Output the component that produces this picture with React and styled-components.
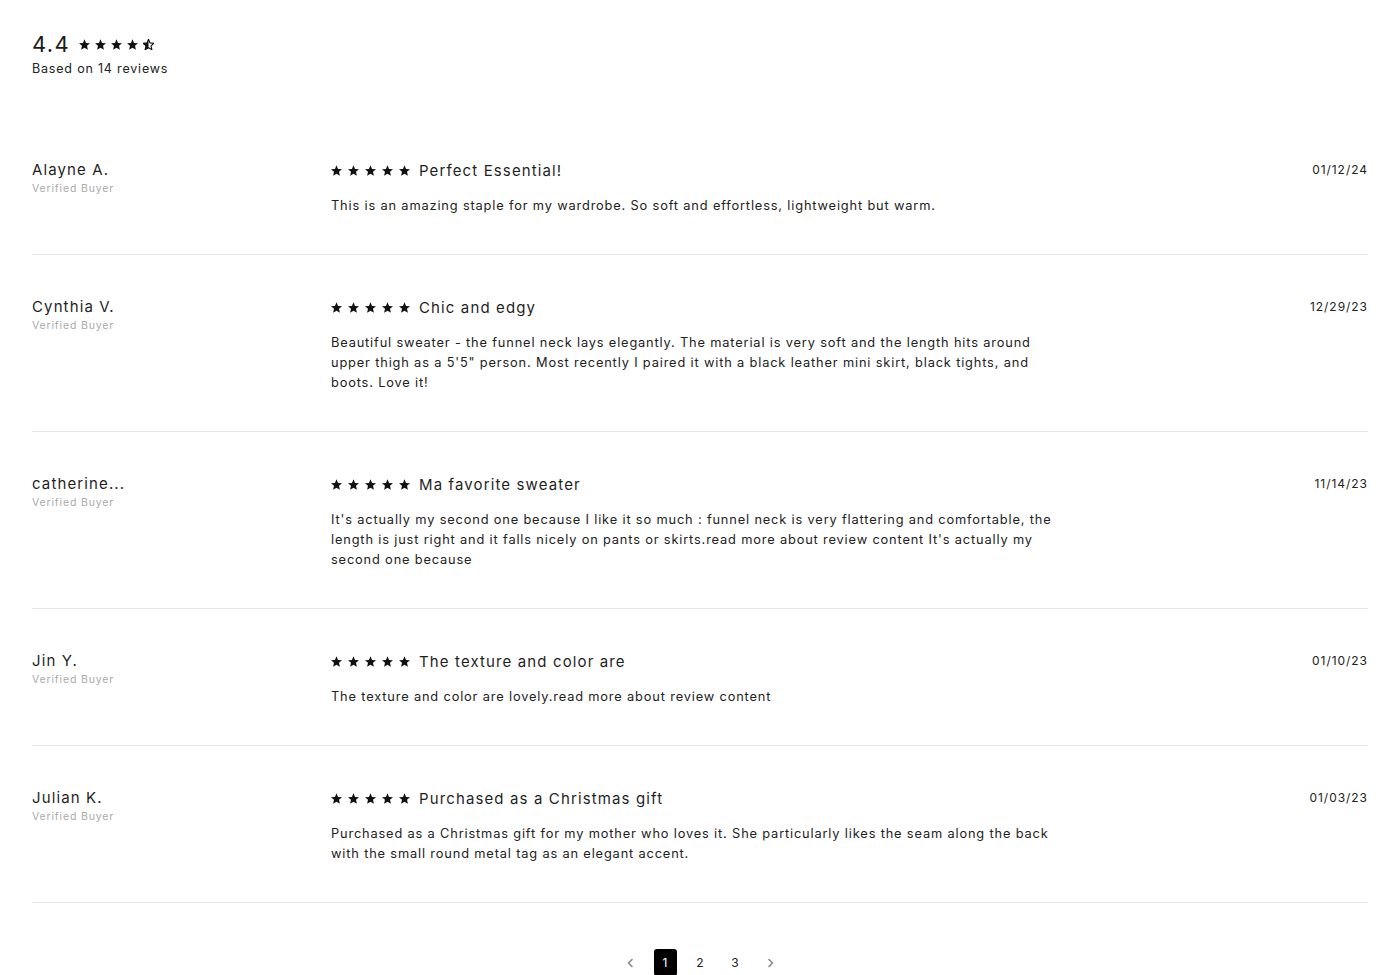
import React from "react";
import styled, { createGlobalStyle } from "styled-components";

const GlobalStyle = createGlobalStyle`
  body {
    margin: 0;
    background: #ffffff;
    font-family: "Inter", "Noto Sans", sans-serif;
    color: #1c1c1c;
  }
`;

const STAR = "M12 17.27L18.18 21l-1.64-7.03L22 9.24l-7.19-.61L12 2 9.19 8.63 2 9.24l5.46 4.73L5.82 21z";

const Page = styled.div`
  padding: 30px 32px 0 32px;
`;

const Summary = styled.div`
  display: flex;
  flex-direction: column;
  gap: 3px;
`;

const AverageRow = styled.div`
  display: flex;
  align-items: center;
  gap: 9px;
`;

const Average = styled.span`
  font-size: 22px;
  line-height: 28px;
  letter-spacing: 0.06em;
  color: #1a1a1a;
`;

const SummaryText = styled.div`
  font-size: 12.5px;
  letter-spacing: 0.065em;
  color: #222;
`;

const StarRow = styled.div`
  display: flex;
  align-items: center;
  gap: ${(p) => p.gap || 3}px;
`;

const List = styled.div`
  margin-top: 42px;
`;

const Row = styled.div`
  display: grid;
  grid-template-columns: 299px 1fr auto;
  padding: 42px 0 38px;
  border-bottom: 1.5px solid #e6e6e6;
`;

const Author = styled.div`
  display: flex;
  flex-direction: column;
  gap: 2px;
`;

const Name = styled.div`
  font-size: 15px;
  line-height: 20px;
  color: #1f1f1f;
  letter-spacing: 0.075em;
`;

const Verified = styled.div`
  font-size: 10.5px;
  color: #aaaaaa;
  letter-spacing: 0.08em;
`;

const Content = styled.div`
  max-width: 742px;
`;

const TitleRow = styled.div`
  display: flex;
  align-items: center;
  gap: 9px;
  height: 20px;
`;

const Title = styled.span`
  font-size: 15px;
  letter-spacing: 0.075em;
  color: #1f1f1f;
`;

const Body = styled.p`
  margin: 16px 0 0 0;
  font-size: 12.8px;
  line-height: 20px;
  letter-spacing: 0.066em;
  color: #222;
`;

const DateText = styled.div`
  font-size: 12px;
  line-height: 20px;
  letter-spacing: 0.08em;
  color: #222;
`;

const Pager = styled.div`
  display: flex;
  justify-content: center;
  align-items: center;
  gap: 12px;
  margin-top: 46px;
`;

const PageItem = styled.span`
  width: 23px;
  height: 27px;
  display: flex;
  align-items: center;
  justify-content: center;
  font-size: 12px;
  border-radius: 3px;
  background: ${(p) => (p.active ? "#000" : "transparent")};
  color: ${(p) => (p.active ? "#fff" : "#222")};
`;

const Chevron = ({ right }) => (
  <svg width="7" height="10" viewBox="0 0 7 10">
    <path
      d={right ? "M2 1.5l3.5 3.5L2 8.5" : "M5 1.5L1.5 5 5 8.5"}
      fill="none"
      stroke="#888"
      strokeWidth="1.6"
      strokeLinecap="round"
      strokeLinejoin="round"
    />
  </svg>
);

const StarIcon = ({ size, half, id }) => (
  <svg width={size} height={size} viewBox="2 2 20 19">
    {half ? (
      <>
        <defs>
          <clipPath id={id}>
            <rect x="0" y="0" width="12" height="24" />
          </clipPath>
        </defs>
        <path d={STAR} fill="none" stroke="#111" strokeWidth="2" strokeLinejoin="round" />
        <path d={STAR} fill="#111" clipPath={`url(#${id})`} />
      </>
    ) : (
      <path d={STAR} fill="#111" />
    )}
  </svg>
);

const Stars = ({ value = 5, size = 11, gap = 6 }) => (
  <StarRow gap={gap}>
    {[0, 1, 2, 3, 4].map((i) => (
      <StarIcon
        key={i}
        size={size}
        id={`half-${i}`}
        half={value - i > 0 && value - i < 1}
      />
    ))}
  </StarRow>
);

const reviews = [
  {
    name: "Alayne A.",
    title: "Perfect Essential!",
    body: "This is an amazing staple for my wardrobe. So soft and effortless, lightweight but warm.",
    date: "01/12/24",
  },
  {
    name: "Cynthia V.",
    title: "Chic and edgy",
    body: "Beautiful sweater - the funnel neck lays elegantly. The material is very soft and the length hits around upper thigh as a 5'5\" person. Most recently I paired it with a black leather mini skirt, black tights, and boots. Love it!",
    date: "12/29/23",
  },
  {
    name: "catherine...",
    title: "Ma favorite sweater",
    body: "It's actually my second one because I like it so much : funnel neck is very flattering and comfortable, the length is just right and it falls nicely on pants or skirts.read more about review content It's actually my second one because",
    date: "11/14/23",
  },
  {
    name: "Jin Y.",
    title: "The texture and color are",
    body: "The texture and color are lovely.read more about review content",
    date: "01/10/23",
  },
  {
    name: "Julian K.",
    title: "Purchased as a Christmas gift",
    body: "Purchased as a Christmas gift for my mother who loves it. She particularly likes the seam along the back with the small round metal tag as an elegant accent.",
    date: "01/03/23",
  },
];

export default function App() {
  return (
    <Page>
      <GlobalStyle />
      <Summary>
        <AverageRow>
          <Average>4.4</Average>
          <Stars value={4.5} size={11} gap={5} />
        </AverageRow>
        <SummaryText>Based on 14 reviews</SummaryText>
      </Summary>
      <List>
        {reviews.map((r) => (
          <Row key={r.name}>
            <Author>
              <Name>{r.name}</Name>
              <Verified>Verified Buyer</Verified>
            </Author>
            <Content>
              <TitleRow>
                <Stars size={11} gap={6} />
                <Title>{r.title}</Title>
              </TitleRow>
              <Body>{r.body}</Body>
            </Content>
            <DateText>{r.date}</DateText>
          </Row>
        ))}
      </List>
      <Pager>
        <PageItem>
          <Chevron />
        </PageItem>
        <PageItem active>1</PageItem>
        <PageItem>2</PageItem>
        <PageItem>3</PageItem>
        <PageItem>
          <Chevron right />
        </PageItem>
      </Pager>
    </Page>
  );
}
